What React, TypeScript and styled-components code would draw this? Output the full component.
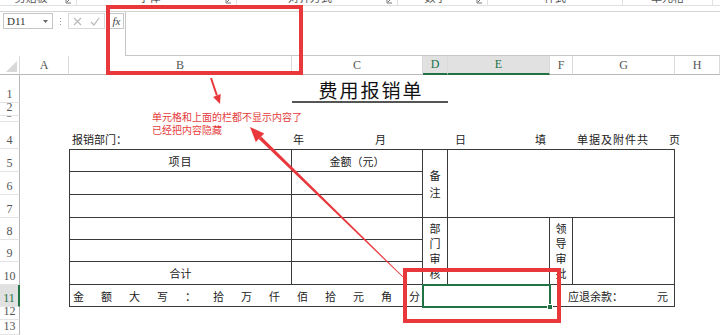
import React from "react";
import styled, { createGlobalStyle } from "styled-components";

const GlobalStyle = createGlobalStyle`
  html, body { margin: 0; padding: 0; background: #fff; }
  body { font-family: "Noto Sans CJK SC", sans-serif; }
  * { box-sizing: border-box; }
`;

const CJK = `"Noto Sans CJK SC", "Liberation Serif", sans-serif`;
const SERIF = `"Liberation Serif", "Noto Sans CJK SC", serif`;
const LINE = "1px solid #3a3a3a";
const GREEN = "#217346";
const RED = "#e8383c";

const Window = styled.div`
  position: relative;
  width: 720px;
  height: 335px;
  overflow: hidden;
  background: #fff;
`;

/* ribbon group captions, only their lower edge is visible */
const RibbonStrip = styled.div`
  display: flex;
  height: 6px;
  border-bottom: 1px solid #e1e1e1;
  overflow: hidden;
`;

const RibbonGroup = styled.div<{ $w: number }>`
  display: flex;
  flex: 0 0 ${(p) => p.$w}px;
  border-right: 1px solid #e1e1e1;
`;

const GroupLabel = styled.div`
  flex: 1;
  text-align: center;
  font: 11px/13px ${CJK};
  color: #555;
  margin-top: -9px;
`;

const Launcher = styled.svg`
  flex: 0 0 14px;
  margin-top: -3px;
`;

const FormulaBar = styled.div`
  display: flex;
  height: 45px;
  margin-top: 5px;
  border-top: 1px solid #d4d4d4;
`;

const NameBox = styled.div`
  margin: 1px 0 0 3px;
  width: 50px;
  height: 16px;
  border: 1px solid #c6c6c6;
  display: flex;
  align-items: center;
  justify-content: space-between;
  padding: 0 4px 0 3px;
  font: 11px ${SERIF};
  color: #333;
`;

const Grip = styled.div`
  width: 15px;
  display: flex;
  flex-direction: column;
  align-items: center;
  gap: 2px;
  padding-top: 6px;
  & > span {
    width: 1px;
    height: 1px;
    background: #9a9a9a;
  }
`;

const EditButtons = styled.div`
  margin-top: 1px;
  width: 37px;
  height: 16px;
  border: 1px solid #dadada;
  display: flex;
  align-items: center;
  justify-content: space-around;
`;

const FxBox = styled.div`
  margin: 1px 0 0 4px;
  width: 15px;
  height: 16px;
  border: 1px solid #c6c6c6;
  display: flex;
  align-items: center;
  justify-content: center;
  font: italic 11px ${SERIF};
  color: #444;
`;

const FormulaInput = styled.div`
  flex: 1;
  margin-left: 1px;
  border-left: 1px solid #c6c6c6;
  border-bottom: 1px solid #c6c6c6;
`;

const Sheet = styled.div`
  display: grid;
  grid-template-columns: 20px 49px 223px 131px 25px 102px 23px 102px 45px;
  grid-template-rows: 19px 28px 13px 6px 27px 23px 23px 23px 22px 22px 23px 22px 13px 15px;
`;

const Corner = styled.div`
  grid-column: 1;
  grid-row: 1;
  border-right: 1px solid #dadada;
  border-bottom: 1px solid #b8b8b8;
  display: flex;
  align-items: flex-end;
  justify-content: flex-end;
  padding: 0 2px 2px 0;
`;

const ColHead = styled.div<{ $sel?: boolean }>`
  grid-row: 1;
  display: flex;
  align-items: center;
  justify-content: center;
  font: 12px ${SERIF};
  color: ${(p) => (p.$sel ? GREEN : "#555")};
  background: ${(p) => (p.$sel ? "#e1e1e1" : "#fff")};
  border-right: 1px solid #dadada;
  border-bottom: ${(p) => (p.$sel ? `2px solid ${GREEN}` : "1px solid #b8b8b8")};
`;

const RowHead = styled.div<{ $row: number; $sel?: boolean }>`
  grid-column: 1;
  grid-row: ${(p) => p.$row + 1};
  display: flex;
  align-items: flex-end;
  justify-content: center;
  overflow: hidden;
  font: 12px/14px ${SERIF};
  padding-bottom: 1px;
  color: ${(p) => (p.$sel ? GREEN : "#555")};
  background: ${(p) => (p.$sel ? "#e1e1e1" : "#fff")};
  border-right: ${(p) => (p.$sel ? `2px solid ${GREEN}` : "1px solid #b8b8b8")};
  border-bottom: 1px solid #e4e4e4;
`;

const Title = styled.div`
  grid-column: 4 / 6;
  grid-row: 2;
  display: flex;
  align-items: flex-end;
  justify-content: center;
  padding: 0 0 0 2px;
  border-bottom: 2px solid #555;
  font: 19px/22px ${CJK};
  letter-spacing: 2px;
  color: #111;
`;

const InfoRow = styled.div`
  grid-column: 3 / 10;
  grid-row: 5;
  display: grid;
  grid-template-columns: 221px 82px 80px 80px 42px 92px auto;
  align-items: end;
  padding: 0 0 3px 3px;
  font: 11px/14px ${CJK};
  color: #222;
`;

const Spaced = styled.span`
  letter-spacing: 1px;
`;

const Cell = styled.div<{ $c: string; $r: string; $edges?: string; $justify?: string; $pad?: string }>`
  grid-column: ${(p) => p.$c};
  grid-row: ${(p) => p.$r};
  display: flex;
  align-items: center;
  justify-content: ${(p) => p.$justify || "center"};
  padding: ${(p) => p.$pad || "0"};
  font: 11px/14px ${CJK};
  color: #222;
  border-top: ${(p) => (p.$edges?.includes("t") ? LINE : "none")};
  border-right: ${(p) => (p.$edges?.includes("r") ? LINE : "none")};
  border-bottom: ${(p) => (p.$edges?.includes("b") ? LINE : "none")};
  border-left: ${(p) => (p.$edges?.includes("l") ? LINE : "none")};
`;

const Stack = styled.div<{ $gap: number }>`
  display: flex;
  flex-direction: column;
  align-items: center;
  gap: ${(p) => p.$gap}px;
  line-height: 11px;
`;

const Selection = styled.div`
  grid-column: 5 / 7;
  grid-row: 12;
  margin: -1px;
  border: 2px solid ${GREEN};
  position: relative;
  z-index: 2;
`;

const FillHandle = styled.div`
  position: absolute;
  right: -4px;
  bottom: -4px;
  width: 6px;
  height: 6px;
  background: ${GREEN};
  border: 1px solid #fff;
`;

const RedFrame = styled.div<{ $x: number; $y: number; $w: number; $h: number }>`
  position: absolute;
  left: ${(p) => p.$x}px;
  top: ${(p) => p.$y}px;
  width: ${(p) => p.$w}px;
  height: ${(p) => p.$h}px;
  border: 4px solid ${RED};
  z-index: 5;
`;

const Note = styled.div`
  position: absolute;
  left: 152px;
  top: 110px;
  font: 10px/13px ${CJK};
  color: #e63d3d;
  z-index: 5;
`;

const Arrows = styled.svg`
  position: absolute;
  left: 0;
  top: 0;
  z-index: 6;
  pointer-events: none;
`;

const groups = [
  { label: "剪贴板", w: 77, launcher: true },
  { label: "字体", w: 160, launcher: true },
  { label: "对齐方式", w: 161, launcher: true },
  { label: "数字", w: 90, launcher: true },
  { label: "样式", w: 135, launcher: false },
  { label: "单元格", w: 90, launcher: false },
];

const columns = ["A", "B", "C", "D", "E", "F", "G", "H"];
const amountWords = ["金", "额", "大", "写", "：", "拾", "万", "仟", "佰", "拾", "元", "角", "分"];

const vertical = (text: string, gap: number) => (
  <Stack $gap={gap}>
    {text.split("").map((ch, i) => (
      <span key={i}>{ch}</span>
    ))}
  </Stack>
);

const App: React.FC = () => {
  return (
    <>
      <GlobalStyle />
      <Window>
        <RibbonStrip>
          {groups.map((g) => (
            <RibbonGroup key={g.label} $w={g.w}>
              <GroupLabel>{g.label}</GroupLabel>
              {g.launcher && (
                <Launcher width="14" height="8" viewBox="0 0 14 8">
                  <path d="M4 1v5h5" fill="none" stroke="#777" strokeWidth="1" />
                  <path d="M5 5l4-4" stroke="#777" strokeWidth="1" />
                </Launcher>
              )}
            </RibbonGroup>
          ))}
        </RibbonStrip>

        <FormulaBar>
          <NameBox>
            D11
            <svg width="5" height="3" viewBox="0 0 5 3">
              <path d="M0 0h5L2.5 3z" fill="#666" />
            </svg>
          </NameBox>
          <Grip>
            <span />
            <span />
            <span />
          </Grip>
          <EditButtons>
            <svg width="9" height="9" viewBox="0 0 9 9">
              <path d="M1 1l7 7M8 1L1 8" stroke="#b8b8b8" strokeWidth="1.2" />
            </svg>
            <svg width="10" height="9" viewBox="0 0 10 9">
              <path d="M1 5l3 3 5-7" fill="none" stroke="#b8b8b8" strokeWidth="1.2" />
            </svg>
          </EditButtons>
          <FxBox>fx</FxBox>
          <FormulaInput />
        </FormulaBar>

        <Sheet>
          <Corner>
            <svg width="11" height="11" viewBox="0 0 11 11">
              <path d="M11 0v11H0z" fill="#d8d8d8" />
            </svg>
          </Corner>
          {columns.map((c) => (
            <ColHead key={c} $sel={c === "D" || c === "E"}>
              {c}
            </ColHead>
          ))}
          {Array.from({ length: 13 }, (_, i) => (
            <RowHead key={i} $row={i + 1} $sel={i + 1 === 11}>
              {i + 1}
            </RowHead>
          ))}

          <Title>费用报销单</Title>

          <InfoRow>
            <span>报销部门：</span>
            <span>年</span>
            <span>月</span>
            <span>日</span>
            <span>填</span>
            <Spaced>单据及附件共</Spaced>
            <span>页</span>
          </InfoRow>

          {/* row 5 */}
          <Cell $c="3" $r="6" $edges="tlrb">
            <Spaced>项目</Spaced>
          </Cell>
          <Cell $c="4" $r="6" $edges="trb">
            金额（元）
          </Cell>
          <Cell $c="5" $r="6 / 9" $edges="trb">
            {vertical("备注", 6)}
          </Cell>
          <Cell $c="6 / 9" $r="6 / 9" $edges="trb" />

          {/* rows 6 - 10 */}
          {[7, 8, 9, 10].map((r) => (
            <React.Fragment key={r}>
              <Cell $c="3" $r={`${r}`} $edges="lrb" />
              <Cell $c="4" $r={`${r}`} $edges="rb" />
            </React.Fragment>
          ))}
          <Cell $c="3" $r="11" $edges="lrb">
            合计
          </Cell>
          <Cell $c="4" $r="11" $edges="rb" />

          <Cell $c="5" $r="9 / 12" $edges="rb">
            {vertical("部门审核", 4)}
          </Cell>
          <Cell $c="6" $r="9 / 12" $edges="rb" />
          <Cell $c="7" $r="9 / 12" $edges="rb">
            {vertical("领导审批", 4)}
          </Cell>
          <Cell $c="8" $r="9 / 12" $edges="rb" />

          {/* row 11 */}
          <Cell $c="3 / 5" $r="12" $edges="lb" $justify="space-between" $pad="0 3px">
            {amountWords.map((w, i) => (
              <span key={i}>{w}</span>
            ))}
          </Cell>
          <Cell $c="5 / 7" $r="12" $edges="b" />
          <Selection>
            <FillHandle />
          </Selection>
          <Cell $c="7 / 9" $r="12" $edges="rb" $justify="space-between" $pad="0 6px 0 18px">
            <span>应退余款：</span>
            <span>元</span>
          </Cell>
        </Sheet>

        <RedFrame $x={106} $y={5} $w={197} $h={70} />
        <RedFrame $x={403} $y={268} $w={158} $h={55} />
        <Note>
          单元格和上面的栏都不显示内容了
          <br />
          已经把内容隐藏
        </Note>
        <Arrows width="720" height="335" viewBox="0 0 720 335">
          <path d="M211 78L216.9 95.5" stroke={RED} strokeWidth="2" />
          <path d="M220 104L220.7 94.1L213.1 96.9z" fill={RED} />
          <path d="M403.3 276.7L402.7 277.3L258.8 139L261.2 136.6z" fill={RED} />
          <path d="M250 127L264.2 133.5L255.8 142.1z" fill={RED} />
        </Arrows>
      </Window>
    </>
  );
};

export default App;
